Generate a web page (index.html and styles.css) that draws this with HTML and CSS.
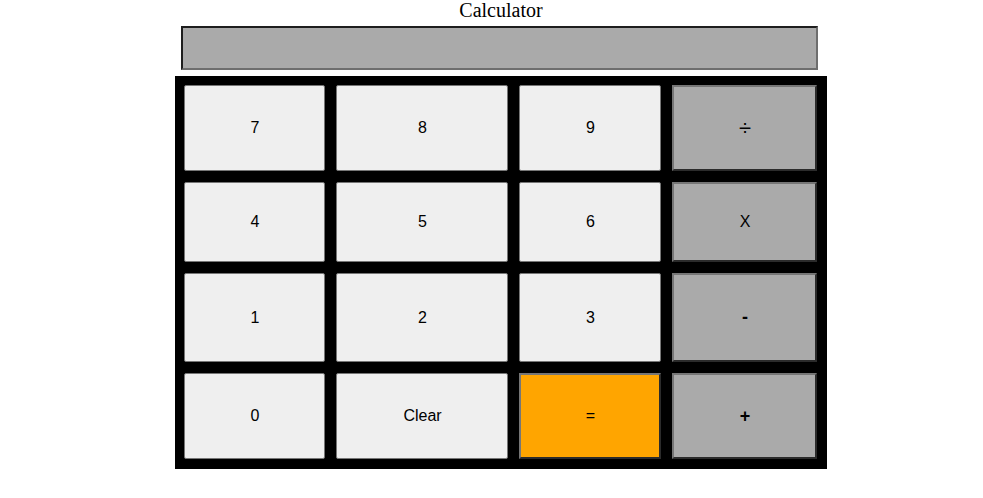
FILE: index.html
```html
<!DOCTYPE html>
<html lang="en">
<head>
    <meta charset="UTF-8">
    <meta name="viewport" content="width=device-width, initial-scale=1.0">
    <title>Calculator</title>
    <link rel="stylesheet" href="styles.css">
</head>
<body>
    <div class="calculator">
        <div class="title">Calculator</div>
        <div class="display" id="display"></div>

        <div class="keys">
            <button class="key">7</button>
            <button class="key">8</button>
            <button class="key">9</button>
            <button class="key op divide">÷</button>

            <button class="key">4</button>
            <button class="key">5</button>
            <button class="key">6</button>
            <button class="key op">X</button>

            <button class="key">1</button>
            <button class="key">2</button>
            <button class="key">3</button>
            <button class="key op bold">-</button>

            <button class="key">0</button>
            <button class="key">Clear</button>
            <button class="key equals">=</button>
            <button class="key op bold">+</button>
        </div>
    </div>
</body>
</html>
```

FILE: styles.css
```css
* {
    margin: 0;
    padding: 0;
    box-sizing: border-box;
}

body {
    font-family: 'Liberation Serif', 'Times New Roman', serif;
    background: #fff;
}

.calculator {
    width: 652px;
    margin-left: 175px;
}

.title {
    font-size: 20px;
    line-height: 20px;
    height: 20px;
    text-align: center;
    color: #000;
    margin-bottom: 6px;
}

.display {
    width: 637px;
    height: 44px;
    margin: 0 0 6px 6px;
    background: #aaaaaa;
    border: 2px solid;
    border-color: #1e1e1e #6e6e6e #6e6e6e #1e1e1e;
}

.keys {
    display: grid;
    grid-template-columns: 141px 172px 142px 145px;
    grid-template-rows: 86px 80px 89px 86px;
    gap: 11px;
    padding: 9px 10px 10px 9px;
    background: #000;
}

.key {
    font-family: 'Liberation Sans', Arial, sans-serif;
    font-size: 16px;
    color: #000;
    background: #efefef;
    border: 1px solid #767676;
    border-radius: 2px;
    padding-left: 1px;
    cursor: pointer;
}

.key.op {
    background: #aaaaaa;
    border: 2px solid;
    border-color: #767676 #2b2b2b #2b2b2b #767676;
    border-radius: 0;
}

.key.equals {
    background: #ffa500;
    border: 2px solid;
    border-color: #767676 #2b2b2b #2b2b2b #767676;
    border-radius: 0;
}

.key.divide {
    font-size: 22px;
}

.key.bold {
    font-weight: bold;
    font-size: 18px;
}
```
